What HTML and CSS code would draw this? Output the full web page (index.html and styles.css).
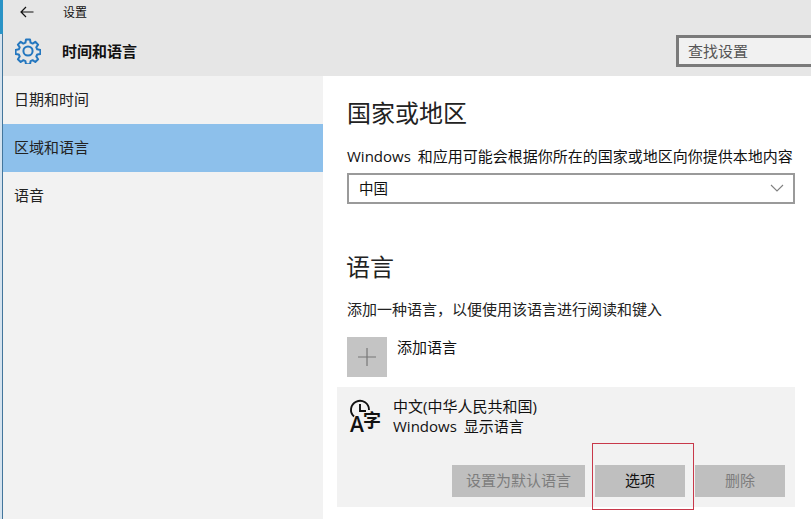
FILE: index.html
```html
<!DOCTYPE html>
<html lang="zh-CN">
<head>
<meta charset="utf-8">
<title>设置</title>
<link rel="stylesheet" href="styles.css">
</head>
<body>
<div class="window">
  <header class="header">
    <div class="titlebar">
      <svg class="back" width="14" height="12" viewBox="0 0 14 12"><path d="M13.500 6H1.200M6 1 1 6l5 5" fill="none" stroke="#111" stroke-width="1.200"/></svg>
      <span class="title">设置</span>
    </div>
    <div class="headrow">
      <svg class="gear" width="26" height="26" viewBox="0 0 26 26"><path d="M11 1.500h4l.6 3.200 2 .9 2.700-1.800 2.800 2.800-1.800 2.700.9 2 3.200.6v4l-3.200.6-.9 2 1.800 2.700-2.800 2.800-2.700-1.800-2 .9-.6 3.200h-4l-.6-3.200-2-.9-2.700 1.800-2.800-2.800 1.800-2.700-.9-2-3.200-.6v-4l3.200-.6.9-2-1.800-2.700 2.800-2.800 2.700 1.800 2-.9z" fill="none" stroke="#2477bf" stroke-width="2" stroke-linejoin="round"/><circle cx="13" cy="13" r="4.600" fill="none" stroke="#2477bf" stroke-width="2"/></svg>
      <h1 class="section-title">时间和语言</h1>
      <div class="search">查找设置</div>
    </div>
  </header>
  <div class="body">
    <nav class="side">
      <div class="side-item">日期和时间</div>
      <div class="side-item active">区域和语言</div>
      <div class="side-item">语音</div>
    </nav>
    <main class="main">
      <h2 class="h-region">国家或地区</h2>
      <p class="desc">Windows 和应用可能会根据你所在的国家或地区向你提供本地内容</p>
      <div class="select">
        <span>中国</span>
        <svg width="14" height="8" viewBox="0 0 14 8"><path d="M1 1l6 6 6-6" fill="none" stroke="#808080" stroke-width="1.100"/></svg>
      </div>
      <h2 class="h-lang">语言</h2>
      <p class="desc2">添加一种语言，以便使用该语言进行阅读和键入</p>
      <div class="add">
        <div class="add-box"><svg width="18" height="18" viewBox="0 0 18 18"><path d="M9 0v18M0 9h18" stroke="#777" stroke-width="1.200"/></svg></div>
        <span class="add-label">添加语言</span>
      </div>
      <section class="lang-card">
        <div class="lang-info">
          <svg class="lang-icon" width="34" height="42" viewBox="0 0 34 42"><path d="M5 20.500A9 9 0 1 1 20 14" fill="none" stroke="#111" stroke-width="1.900"/><path d="M11 8V15H17" fill="none" stroke="#111" stroke-width="1.900"/><text class="icon-a" x="1" y="36">A</text><text class="icon-zi" x="14" y="31">字</text></svg>
          <div class="lang-text">
            <div>中文(中华人民共和国)</div>
            <div>Windows 显示语言</div>
          </div>
        </div>
        <div class="actions">
          <div class="btn disabled wide">设置为默认语言</div>
          <div class="btn">选项</div>
          <div class="btn disabled">删除</div>
        </div>
        <div class="highlight"></div>
      </section>
    </main>
  </div>
</div>
</body>
</html>
```
FILE: styles.css
```css
* { box-sizing: border-box; }
html, body { margin: 0; padding: 0; height: 100%; overflow: hidden; background: #fff; }
body { font-family: "Open Sans", "Noto Sans CJK SC", sans-serif; color: #111; }
.window { width: 811px; height: 519px; display: flex; flex-direction: column; padding-left: 3px; background: linear-gradient(to right, #2a93c6 3px, transparent 3px) 0 0 / 3px 34px no-repeat, linear-gradient(to right, #d5e3ef 2px, #43769c 2px) 0 0 / 3px 100% no-repeat; }
.header { height: 76px; background: #e6e6e6; flex: none; }
.titlebar { height: 23px; display: flex; align-items: center; font-size: 12px; }
.back { margin-left: 17px; }
.title { margin-left: 29px; }
.headrow { height: 53px; display: flex; align-items: center; padding-top: 2px; }
.gear { margin-left: 12px; }
.section-title { margin: 0 0 0 21px; font-size: 15px; font-weight: 700; }
.search { margin-left: auto; width: 135px; height: 32px; border: 3px solid #7a7a7a; border-right-width: 0; background: #f1f1f1; color: #555; font-size: 15px; line-height: 26px; padding-left: 9px; }
.body { flex: 1; display: flex; min-height: 0; }
.side { width: 320px; flex: none; background: #f2f2f2; }
.side-item { height: 48px; font-size: 15px; line-height: 47px; padding-left: 11px; color: #222; }
.active { background: #8dc0eb; }
.main { flex: 1; padding: 21px 0 0 24px; min-width: 0; }
.h-region, .h-lang { margin: 0; font-size: 24px; font-weight: 400; line-height: 32px; color: #222; }
.h-lang { margin-top: 47px; margin-left: -1px; }
.desc { margin: 17px 0 0; font-size: 15px; line-height: 20px; white-space: nowrap; word-spacing: 3px; }
.select { margin-top: 7px; width: 448px; height: 31px; border: 2px solid #9a9a9a; display: flex; align-items: center; justify-content: space-between; padding: 0 9px 2px 10px; font-size: 14.500px; }
.desc2 { margin: 16px 0 0; font-size: 15px; line-height: 20px; color: #222; }
.add { margin-top: 18px; height: 40px; display: flex; }
.add-box { width: 40px; height: 40px; background: #c4c4c4; display: flex; align-items: center; justify-content: center; }
.add-label { margin-left: 10px; font-size: 15px; line-height: 20px; }
.lang-card { position: relative; margin: 10px 0 0 -10px; width: 458px; height: 120px; background: #f2f2f2; padding: 9px 10px 0 12px; display: flex; flex-direction: column; }
.lang-info { display: flex; }
.lang-icon { flex: none; }
.icon-a { font-family: "Open Sans", sans-serif; font-size: 21px; font-weight: 600; fill: #111; }
.icon-zi { font-family: "Noto Sans CJK SC", sans-serif; font-size: 18px; font-weight: 700; fill: #111; }
.lang-text { margin-left: 10px; font-size: 15px; line-height: 20px; word-spacing: 3px; }
.actions { margin-top: auto; margin-bottom: 10px; align-self: flex-end; display: flex; gap: 10px; }
.btn { width: 90px; height: 32px; background: #bfbfbf; font-size: 15px; line-height: 30px; text-align: center; }
.disabled { color: #7d7d7d; }
.wide { width: 133px; }
.highlight { position: absolute; left: 255px; top: 56px; width: 102px; height: 67px; border: 1px solid #c8384a; }
```
